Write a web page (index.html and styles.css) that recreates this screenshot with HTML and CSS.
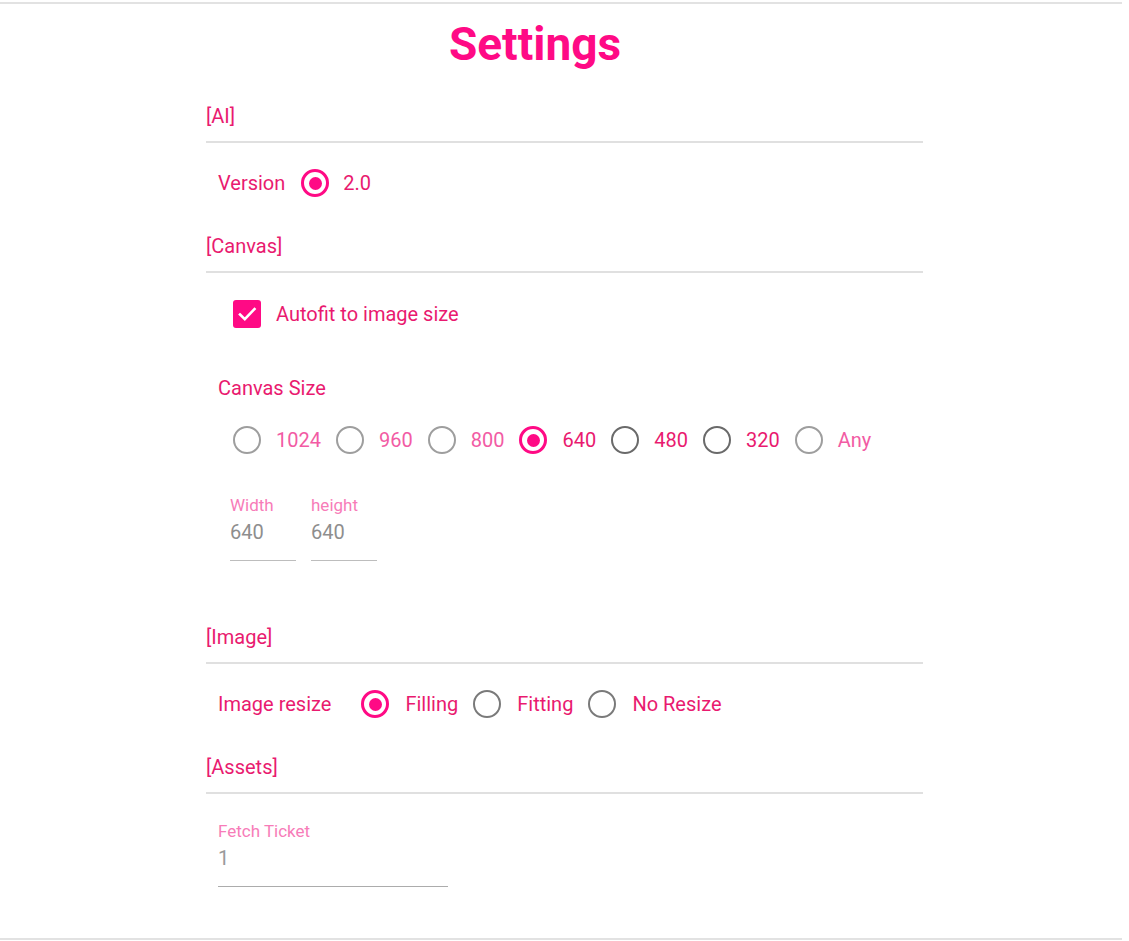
FILE: index.html
```html
<!DOCTYPE html>
<html>
<head>
<meta charset="utf-8">
<link rel="stylesheet" href="styles.css">
</head>
<body>
<div class="page">
  <h1 class="title">Settings</h1>
  <div class="content">
    <div class="section-title first">[AI]</div>
    <div class="row">
      <span class="label">Version</span>
      <span class="radio checked"></span>
      <span class="opt">2.0</span>
    </div>

    <div class="section-title">[Canvas]</div>
    <div class="check-row">
      <span class="checkbox">
        <svg width="28" height="28" viewBox="0 0 28 28"><path d="M7 14.5 L11.8 19.2 L21.5 9" fill="none" stroke="#fff" stroke-width="2.6" stroke-linecap="square"/></svg>
      </span>
      <span class="opt">Autofit to image size</span>
    </div>
    <div class="sub-label">Canvas Size</div>
    <div class="radio-row">
      <span class="item"><span class="radio light"></span><span class="opt light">1024</span></span>
      <span class="item"><span class="radio light"></span><span class="opt light">960</span></span>
      <span class="item"><span class="radio light"></span><span class="opt light">800</span></span>
      <span class="item"><span class="radio checked"></span><span class="opt">640</span></span>
      <span class="item"><span class="radio dark"></span><span class="opt">480</span></span>
      <span class="item"><span class="radio dark"></span><span class="opt">320</span></span>
      <span class="item"><span class="radio light"></span><span class="opt light">Any</span></span>
    </div>
    <div class="fields">
      <div class="field small">
        <div class="f-label">Width</div>
        <div class="f-value">640</div>
      </div>
      <div class="field small">
        <div class="f-label">height</div>
        <div class="f-value">640</div>
      </div>
    </div>

    <div class="section-title image">[Image]</div>
    <div class="row">
      <span class="label wide">Image resize</span>
      <span class="item"><span class="radio checked"></span><span class="opt">Filling</span></span>
      <span class="item"><span class="radio"></span><span class="opt">Fitting</span></span>
      <span class="item"><span class="radio"></span><span class="opt">No Resize</span></span>
    </div>

    <div class="section-title">[Assets]</div>
    <div class="field ticket">
      <div class="f-label">Fetch Ticket</div>
      <div class="f-value">1</div>
    </div>
  </div>
</div>
</body>
</html>
```
FILE: styles.css
```css
* { box-sizing: border-box; }
body {
  margin: 0;
  background: #fff;
  font-family: Roboto, "Liberation Sans", sans-serif;
  color: #e91a6f;
}
.page {
  width: 1122px;
  height: 938px;
  margin-top: 2px;
  border-top: 2px solid #e2e2e2;
  border-bottom: 2px solid #e2e2e2;
}
.title {
  margin: 13px 0 0 0;
  width: 1070px;
  text-align: center;
  font-size: 46px;
  line-height: 54px;
  font-weight: 700;
  color: #ff0a85;
}
.content {
  margin-left: 206px;
  width: 717px;
}
.section-title {
  font-size: 20px;
  line-height: 24px;
  padding-bottom: 13px;
  border-bottom: 2px solid #e0e0e0;
  margin-top: 37px;
  color: #e91a6f;
}
.section-title.first { margin-top: 33px; }
.section-title.image { margin-top: 64px; }
.row {
  display: flex;
  align-items: center;
  height: 28px;
  margin: 26px 0 0 12px;
  font-size: 20px;
}
.label { margin-right: 16px; }
.label.wide { margin-right: 30px; }
.item {
  display: flex;
  align-items: center;
  gap: 16px;
  margin-right: 15px;
}
.row .radio { margin-right: 14px; }
.row .item .radio { margin-right: 0; }
.radio {
  width: 28px;
  height: 28px;
  border-radius: 50%;
  border: 2.5px solid #7a7a7a;
  display: inline-flex;
  align-items: center;
  justify-content: center;
  flex: none;
}
.radio.light { border-color: #9e9e9e; }
.radio.dark { border-color: #6a6a6a; }
.radio.checked { border: 3px solid #ff0a85; }
.radio.checked::after {
  content: "";
  width: 13px;
  height: 13px;
  border-radius: 50%;
  background: #ff0a85;
}
.opt { font-size: 20px; color: #e91a6f; }
.opt.light { color: #f25ba4; }
.check-row {
  display: flex;
  align-items: center;
  gap: 15px;
  margin: 27px 0 0 27px;
  height: 28px;
}
.checkbox {
  width: 28px;
  height: 28px;
  border-radius: 3px;
  background: #ff0a85;
  display: block;
}
.checkbox svg { display: block; }
.sub-label {
  margin: 48px 0 0 12px;
  font-size: 20px;
  line-height: 24px;
}
.radio-row {
  display: flex;
  align-items: center;
  height: 28px;
  margin: 26px 0 0 27px;
}
.radio-row .item { gap: 15px; margin-right: 15px; }
.fields {
  display: flex;
  gap: 15px;
  margin: 42px 0 0 24px;
}
.field {
  border-bottom: 1px solid #bdbdbd;
  padding-bottom: 16px;
}
.field.small { width: 66px; }
.f-label {
  font-size: 17px;
  line-height: 18px;
  color: #f77cb8;
}
.f-value {
  margin-top: 6px;
  font-size: 20px;
  line-height: 24px;
  color: #8e8e8e;
}
.field.ticket {
  width: 230px;
  margin: 28px 0 0 12px;
  border-bottom-color: #acacac;
}
.ticket .f-value { color: #9a9a9a; }
```
